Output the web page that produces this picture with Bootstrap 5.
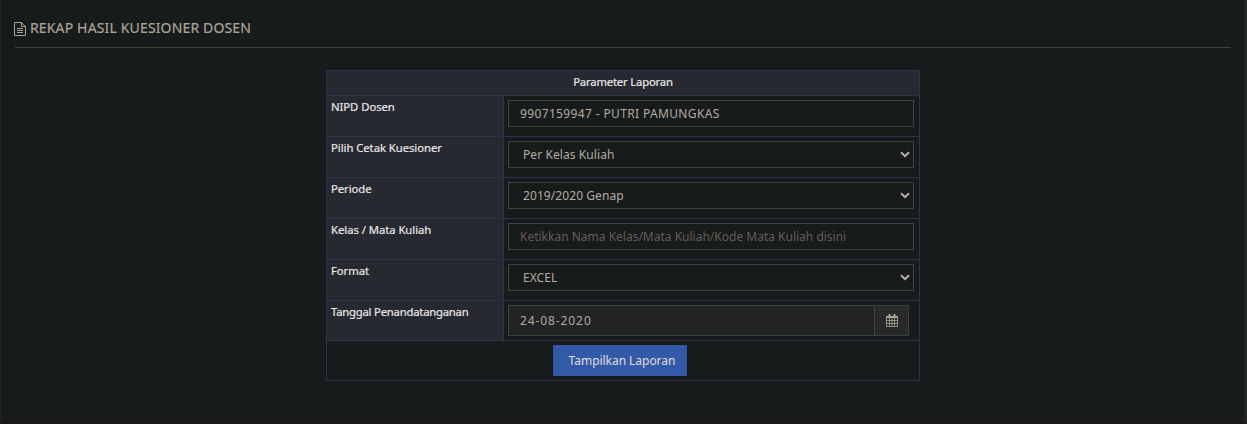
<!DOCTYPE html>
<html lang="id">
<head>
<meta charset="utf-8">
<meta name="viewport" content="width=device-width, initial-scale=1">
<title>Rekap Hasil Kuesioner Dosen</title>
<link href="https://cdn.jsdelivr.net/npm/bootstrap@5.3.0/dist/css/bootstrap.min.css" rel="stylesheet">
<style>
body{background:#181b1c;color:#b2aca0;font-family:"Noto Sans","Open Sans",sans-serif;font-size:12px;overflow:hidden}
.page{height:424px;padding:0 13px 0 14px;border-left:1px solid #202425;border-right:3px solid #222627;border-bottom:3px solid #1a1718}
.page-title{height:48px;padding-top:9px;border-bottom:1px solid #3d4243;font-size:14px;line-height:20px;color:#aba595;gap:4px}
.page-title svg{margin:1px 0 0 -1px}
.page-title h1{font-size:14px;line-height:20px;letter-spacing:.15px;font-weight:400;-webkit-text-stroke:.2px #aba595}
.report{width:594px;margin:22px 0 0 311px;border-collapse:separate;border-spacing:0;table-layout:fixed;border-right:1px solid #2a3548;border-bottom:1px solid #2a3548}
.report th,.report td{height:41px;padding:4px;border-left:1px solid #2a3548;border-top:1px solid #2a3548;vertical-align:top}
.report th{background:#272930;color:#e8e6e3;font-weight:400;font-size:11.3px;line-height:15px;letter-spacing:-.05px;padding-top:3px;-webkit-text-stroke:.2px #e8e6e3}
.report thead th{height:25px;text-align:center;letter-spacing:-.18px}
.report .short td,.report .short th{height:40px}
.report .short th{letter-spacing:-.22px}
.report .form-control,.report .form-select{width:406px;height:27px;min-height:0;padding:0 11px;border:1px solid #3e4445;border-radius:0;background-color:#181b1c;color:#b2aca0;font-size:12px;line-height:25px;box-shadow:none}
.report .form-select{padding-left:14px;letter-spacing:.08px;background-image:url("data:image/svg+xml,%3Csvg xmlns='http://www.w3.org/2000/svg' viewBox='0 0 10 7'%3E%3Cpath d='M1 1.2 5 5.1 9 1.2' fill='none' stroke='%23b8b2a4' stroke-width='2'/%3E%3C/svg%3E");background-size:10px 7px;background-position:right 3px top 9px}
.report .form-control::placeholder{color:#625e57;opacity:1}
.report .lecturer{letter-spacing:.36px}
.report .input-group{width:401px}
.report .input-group .form-control{width:1%;height:31px;background:#222324;letter-spacing:.9px}
.report .input-group-text{width:35px;height:31px;padding:0;border:1px solid #3b3e3f;border-radius:0;background:#28292a;color:#aba595}
.report .btn{width:134px;height:31px;padding:0 0 0 4px;border:1px solid #2f57a4;border-radius:0;background:#325aa8;color:#e0deda;font-size:12px;line-height:29px;letter-spacing:-.04px;margin-right:6px}
</style>
</head>
<body>
<main class="page d-flow-root">
  <header class="page-title d-flex align-items-center">
    <svg width="12" height="14" viewBox="0 0 12 14" fill="none" stroke="currentColor"><path d="M.5.5h7l4 4v9H.5zM7.5.5v4h4M3 6.5h6M3 8.5h6M3 10.5h6"/></svg>
    <h1 class="m-0">REKAP HASIL KUESIONER DOSEN</h1>
  </header>
  <table class="report">
    <colgroup><col style="width:177px"><col></colgroup>
    <thead><tr><th colspan="2">Parameter Laporan</th></tr></thead>
    <tbody>
      <tr><th>NIPD Dosen</th><td><input class="form-control lecturer" value="9907159947 - PUTRI PAMUNGKAS"></td></tr>
      <tr><th>Pilih Cetak Kuesioner</th><td><select class="form-select"><option>Per Kelas Kuliah</option></select></td></tr>
      <tr><th>Periode</th><td><select class="form-select"><option>2019/2020 Genap</option></select></td></tr>
      <tr><th>Kelas / Mata Kuliah</th><td><input class="form-control" placeholder="Ketikkan Nama Kelas/Mata Kuliah/Kode Mata Kuliah disini"></td></tr>
      <tr><th>Format</th><td><select class="form-select"><option>EXCEL</option></select></td></tr>
      <tr class="short"><th>Tanggal Penandatanganan</th><td><div class="input-group flex-nowrap"><input class="form-control" value="24-08-2020"><span class="input-group-text justify-content-center"><svg width="12" height="13" viewBox="0 0 12 13" fill="none" stroke="currentColor"><path d="M.5 2.5h11v10H.5zM.5 3.5h11M.5 6.5h11M.5 9.5h11M3.5 4v8M6 4v8M8.5 4v8" stroke-width=".8"/><path d="M.5 3h11M3.5 0v3M8.5 0v3" stroke-width="2"/></svg></span></div></td></tr>
      <tr class="short"><td colspan="2" class="text-center"><button class="btn btn-primary" type="button">Tampilkan Laporan</button></td></tr>
    </tbody>
  </table>
</main>
<script src="https://cdn.jsdelivr.net/npm/bootstrap@5.3.0/dist/js/bootstrap.bundle.min.js"></script>
</body>
</html>
